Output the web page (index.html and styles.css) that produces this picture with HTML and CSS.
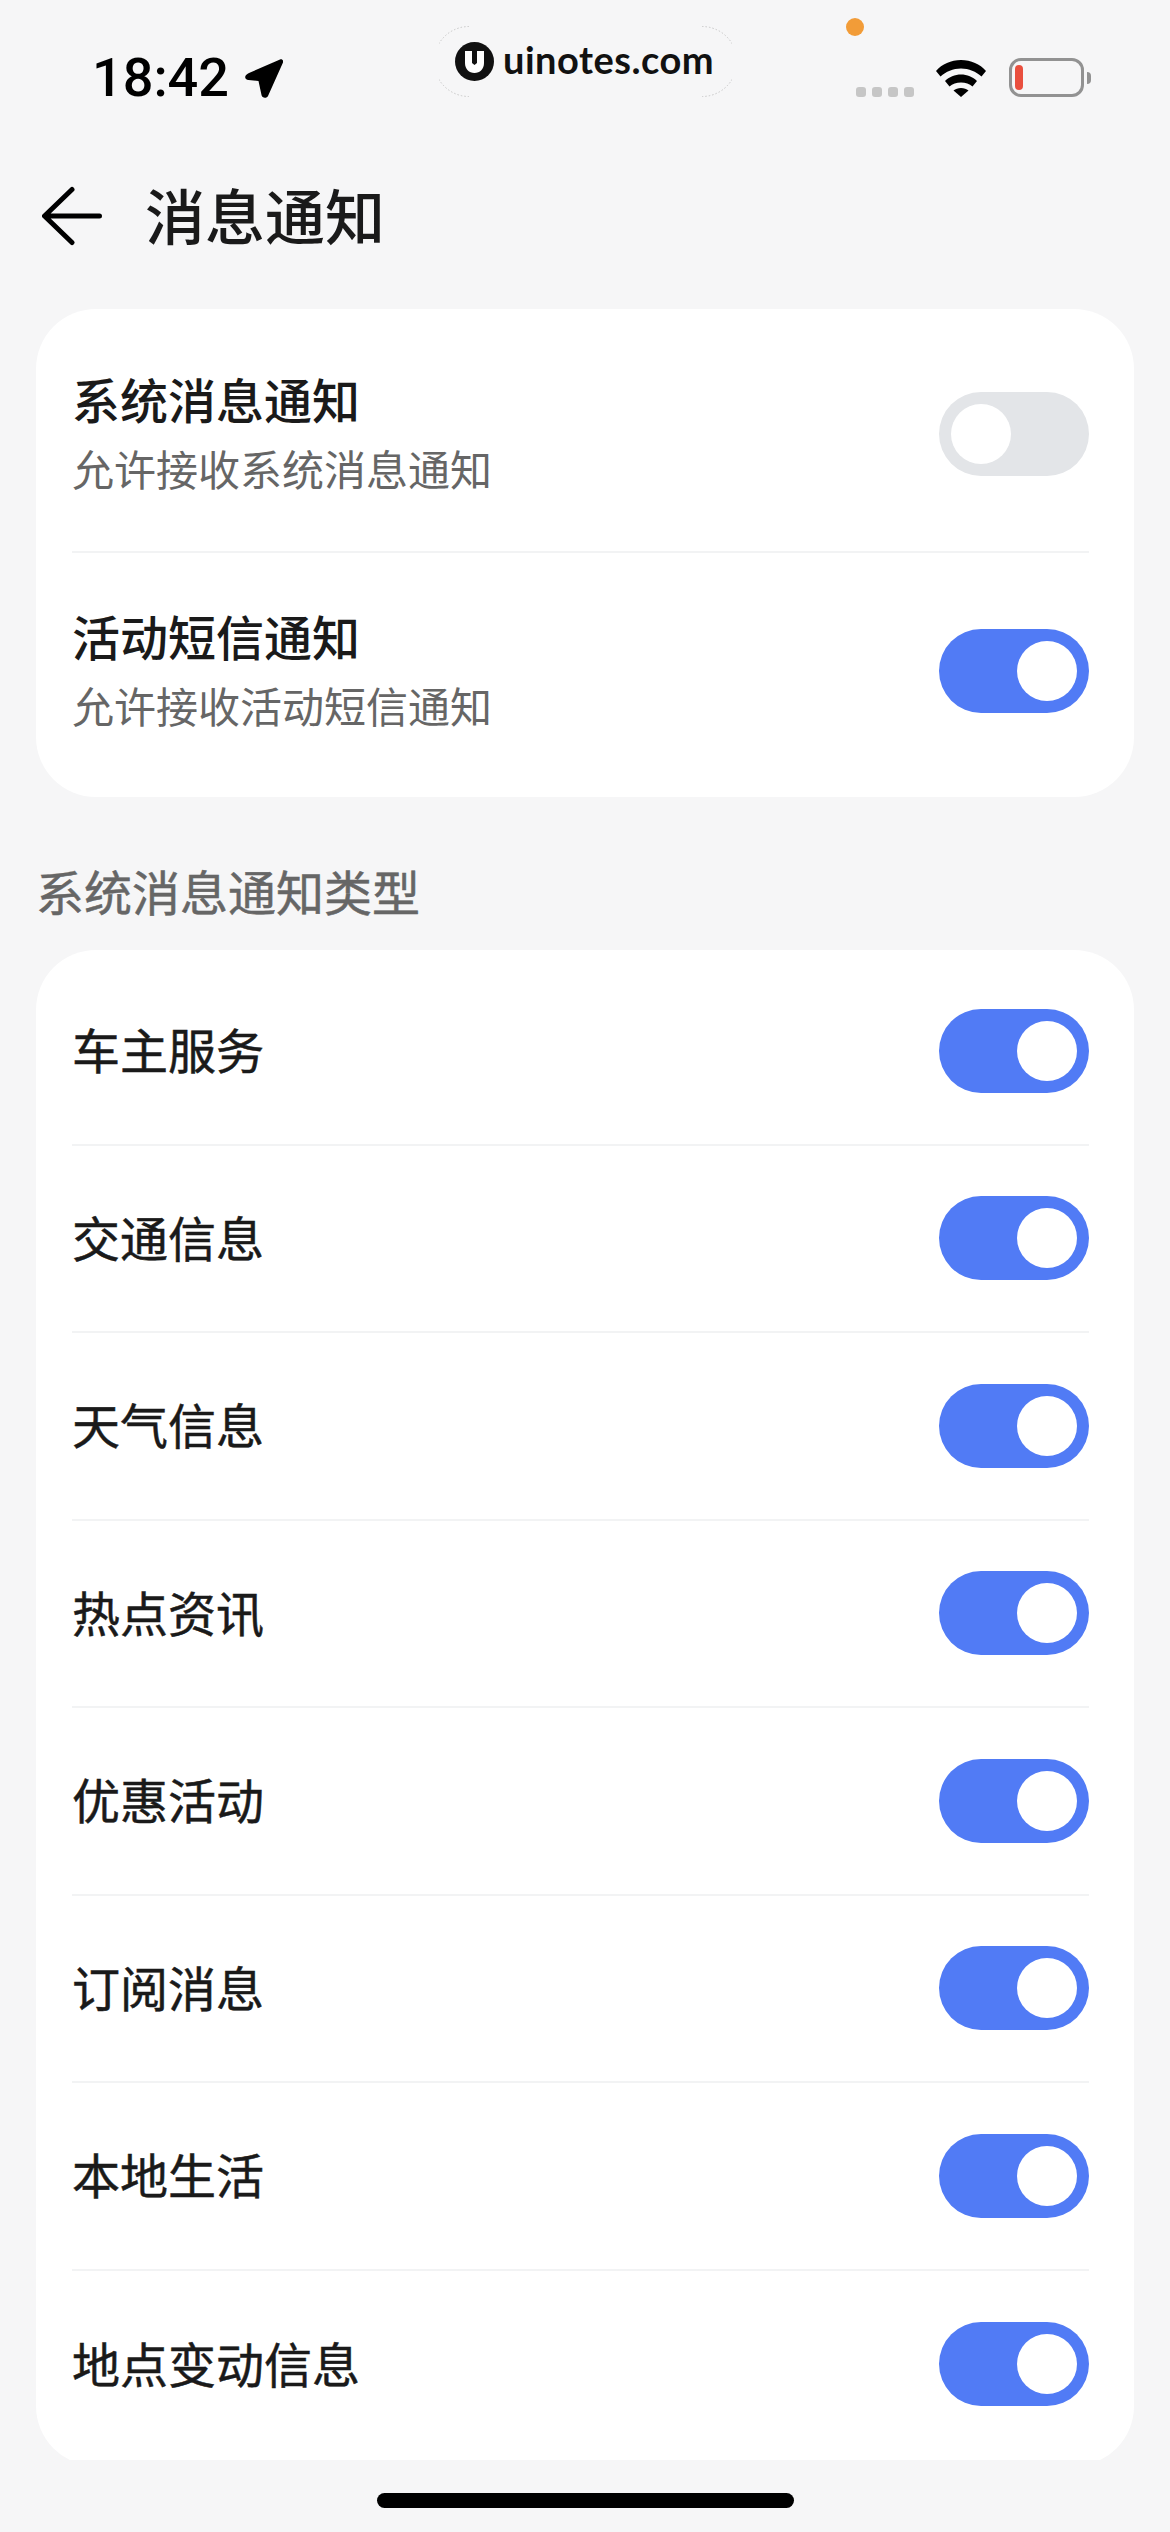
FILE: index.html
```html
<!DOCTYPE html>
<html lang="zh-CN">
<head>
    <meta charset="UTF-8">
    <meta name="viewport" content="width=device-width, initial-scale=1.0">
    <title>消息通知</title>
    <link rel="stylesheet" href="styles.css">
</head>
<body>
    <div class="watermark">
        <svg class="watermark-arcs" viewBox="0 0 293 71">
            <path d="M30 .5A35 35 0 0 0 30 70.5M263 .5A35 35 0 0 1 263 70.5"/>
        </svg>
        <svg class="watermark-logo" viewBox="0 0 39 39">
            <circle cx="19.5" cy="19.5" r="19.5" fill="#111"/>
            <path d="M10 9H17V21L19.500 23 22 21V9H29V21C29 27 25 31 19.500 31S10 27 10 21Z" fill="#fff"/>
        </svg>
        <span class="watermark-text">uinotes.com</span>
    </div>
    <div class="camera-dot"></div>

    <header class="status-bar">
        <div class="status-left">
            <span class="time">18:42</span>
            <svg class="location" viewBox="0 0 39 39">
                <path d="M5 14L36 .5C38-.3 39.600 1.400 39 3.400L24 37C23 39.500 18 39.500 17.500 36L14.500 22 4.500 21C0 20.500 0 16 5 14Z"/>
            </svg>
        </div>
        <div class="status-right">
            <div class="signal"><i></i><i></i><i></i><i></i></div>
            <svg class="wifi" viewBox="0 0 50 37">
                <path d="M0 11C6 4 15 0 25 0C35 0 44 4 50 11L45.500 16.500C40 11.500 33 8.500 25 8.500C17 8.500 10 11.500 4.500 16.500Z"/>
                <path d="M9 21C13 17 19 14.500 25 14.500C31 14.500 37 17 41 21L36.500 26.500C33.500 24 29.500 22.500 25 22.500C20.500 22.500 16.500 24 13.500 26.500Z"/>
                <path d="M17.500 30.500C19.500 29 22 28 25 28C28 28 30.500 29 32.500 30.500L25 37Z"/>
            </svg>
            <div class="battery"><div class="battery-level"></div></div>
        </div>
    </header>

    <nav class="nav-bar">
        <svg class="back" viewBox="0 0 60 60">
            <path d="M57.500 30H3M30 3.500L2.500 30 30 56.500"/>
        </svg>
        <h1 class="page-title">消息通知</h1>
    </nav>

    <main class="content">
        <section class="card">
            <div class="row row-tall">
                <div class="row-text">
                    <div class="row-title">系统消息通知</div>
                    <div class="row-desc">允许接收系统消息通知</div>
                </div>
                <div class="switch"><span class="knob"></span></div>
            </div>
            <div class="row row-tall">
                <div class="row-text">
                    <div class="row-title">活动短信通知</div>
                    <div class="row-desc">允许接收活动短信通知</div>
                </div>
                <div class="switch on"><span class="knob"></span></div>
            </div>
        </section>

        <h2 class="section-label">系统消息通知类型</h2>

        <section class="card">
            <div class="row"><span class="row-name">车主服务</span><div class="switch on"><span class="knob"></span></div></div>
            <div class="row"><span class="row-name">交通信息</span><div class="switch on"><span class="knob"></span></div></div>
            <div class="row"><span class="row-name">天气信息</span><div class="switch on"><span class="knob"></span></div></div>
            <div class="row"><span class="row-name">热点资讯</span><div class="switch on"><span class="knob"></span></div></div>
            <div class="row"><span class="row-name">优惠活动</span><div class="switch on"><span class="knob"></span></div></div>
            <div class="row"><span class="row-name">订阅消息</span><div class="switch on"><span class="knob"></span></div></div>
            <div class="row"><span class="row-name">本地生活</span><div class="switch on"><span class="knob"></span></div></div>
            <div class="row"><span class="row-name">地点变动信息</span><div class="switch on"><span class="knob"></span></div></div>
        </section>
    </main>

    <div class="home-indicator"></div>
</body>
</html>
```
FILE: styles.css
```css
* {
    box-sizing: border-box;
}
body {
    position: relative;
    width: 1170px;
    height: 2532px;
    margin: 0;
    overflow: hidden;
    background: #f6f6f7;
    color: #1a1a1a;
    font-family: "Noto Sans CJK SC", sans-serif;
}

/* watermark and camera dot sit over the status bar */
.watermark {
    position: absolute;
    top: 26px;
    left: 439px;
    display: flex;
    align-items: flex-start;
    width: 293px;
    height: 71px;
    padding: 16px 0 0 16px;
}
.watermark-arcs {
    position: absolute;
    top: 0;
    left: 0;
    width: 293px;
    height: 71px;
    fill: none;
    stroke: #c8c8c8;
    stroke-width: 1;
    stroke-dasharray: 1.500 2;
}
.watermark-logo {
    width: 39px;
    height: 39px;
    margin-right: 9px;
}
.watermark-text {
    margin-top: -6px;
    color: #111;
    font-family: Lato, sans-serif;
    font-size: 38px;
    font-weight: 700;
    line-height: 46px;
    letter-spacing: 0.5px;
}
.camera-dot {
    position: absolute;
    top: 18px;
    left: 846px;
    width: 18px;
    height: 18px;
    border-radius: 50%;
    background: #f29c38;
}

.status-bar {
    display: flex;
    justify-content: space-between;
    align-items: flex-end;
    height: 98px;
    margin-bottom: 32px;
    padding: 0 86px 0 92px;
}
.status-left {
    display: flex;
    align-items: flex-end;
    gap: 15px;
}
.time {
    color: #000;
    font-family: Roboto, sans-serif;
    font-size: 54px;
    font-weight: 500;
    line-height: 38px;
    height: 39px;
}
.location {
    display: block;
    width: 39px;
    height: 39px;
}
.status-right {
    display: flex;
    align-items: flex-end;
    padding-bottom: 1px;
}
.signal {
    display: flex;
    gap: 6px;
    margin-right: 22px;
}
.signal i {
    width: 10px;
    height: 10px;
    border-radius: 3px;
    background: #c6c6c6;
}
.wifi {
    display: block;
    width: 50px;
    height: 37px;
    margin-right: 23px;
}
.battery {
    position: relative;
    width: 75px;
    height: 39px;
    padding: 4px 0 0 3px;
    border: 3px solid #929292;
    border-radius: 12px;
}
.battery::after {
    content: "";
    position: absolute;
    top: 11px;
    left: 75px;
    width: 4px;
    height: 12px;
    border-radius: 0 6px 6px 0;
    background: #929292;
}
.battery-level {
    width: 8px;
    height: 25px;
    border-radius: 4px;
    background: #e94f3e;
}

.nav-bar {
    display: flex;
    align-items: center;
    gap: 43px;
    height: 172px;
    padding-left: 42px;
}
.back {
    display: block;
    width: 60px;
    height: 60px;
    fill: none;
    stroke: #000;
    stroke-width: 5;
    stroke-linecap: round;
    stroke-linejoin: round;
}
.page-title {
    margin: -5px 0 0;
    font-size: 60px;
    font-weight: 500;
    line-height: 80px;
}

.content {
    height: 2151px;
    margin-top: 7px;
    padding: 0 36px;
    overflow: hidden;
}
.card {
    padding: 8px 45px 8px 36px;
    border-radius: 60px;
    background: #fff;
}
.row {
    display: flex;
    justify-content: space-between;
    align-items: center;
    height: 187.5px;
    border-bottom: 2px solid #f2f3f4;
}
.row:last-child {
    border-bottom: 0;
}
.row-tall {
    height: 236px;
}
.row-title {
    font-size: 48px;
    font-weight: 500;
    line-height: 68px;
}
.row-desc {
    color: #666;
    font-size: 42px;
    line-height: 72px;
}
.row-name {
    margin-top: -5px;
    font-size: 48px;
    line-height: 68px;
    -webkit-text-stroke: 0.5px #1a1a1a;
}
.section-label {
    height: 153px;
    margin: 0;
    padding: 34px 0 0;
    color: #666;
    font-size: 48px;
    font-weight: 400;
    line-height: 119px;
    -webkit-text-stroke: 0.5px #666;
}

.switch {
    display: flex;
    flex-shrink: 0;
    width: 150px;
    height: 84px;
    padding: 12px;
    border-radius: 42px;
    background: #e3e5e8;
}
.switch.on {
    justify-content: flex-end;
    background: #517bf5;
}
.knob {
    width: 60px;
    height: 60px;
    border-radius: 50%;
    background: #fff;
}

.home-indicator {
    width: 417px;
    height: 15px;
    margin: 33px auto 0;
    border-radius: 8px;
    background: #000;
}
```
